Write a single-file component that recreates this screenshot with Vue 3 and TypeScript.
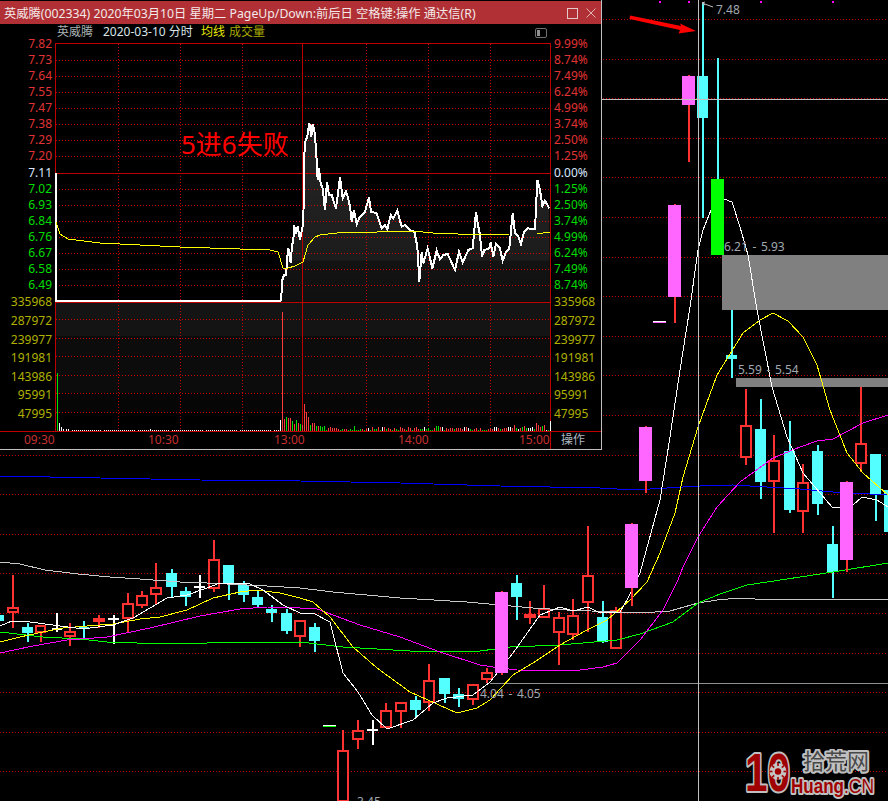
<script setup lang="ts">
type Kind = 'red' | 'solid' | 'cyan' | 'cross' | 'crossCyan' | 'limit' | 'green'
// kind, left, right, body top, body bottom, wick high, wick low
type Candle = [Kind, number, number, number, number, number, number]

const line = (pts: number[][]) => pts.map((p) => p.join(',')).join(' ')

const candles: Candle[] = [
  ['cyan', -4, 4, 615, 621, 615, 621],
  ['red', 7, 19, 607, 613, 575, 628],
  ['cyan', 22, 33, 627, 633, 623, 642],
  ['red', 35, 46, 625, 633, 625, 642],
  ['cross', 52, 62, 628, 630, 613, 632],
  ['red', 64, 76, 631, 637, 623, 646],
  ['crossCyan', 79, 89, 627, 629, 621, 638],
  ['solid', 93, 105, 618, 622, 615, 628],
  ['cross', 108, 119, 618, 620, 615, 644],
  ['red', 122, 134, 603, 619, 593, 632],
  ['red', 136, 148, 595, 606, 591, 608],
  ['red', 150, 162, 587, 595, 563, 604],
  ['cyan', 166, 177, 573, 587, 569, 598],
  ['cyan', 180, 191, 591, 597, 587, 606],
  ['cross', 194, 205, 586, 588, 575, 598],
  ['red', 208, 220, 559, 589, 540, 592],
  ['cyan', 223, 234, 565, 584, 565, 600],
  ['cyan', 238, 249, 585, 595, 581, 602],
  ['cyan', 252, 263, 597, 605, 591, 607],
  ['crossCyan', 266, 277, 609, 613, 605, 622],
  ['cyan', 281, 292, 613, 631, 609, 634],
  ['red', 294, 306, 620, 637, 620, 647],
  ['cyan', 309, 320, 627, 641, 623, 652],
  ['red', 337, 349, 750, 802, 730, 802],
  ['red', 352, 364, 730, 740, 720, 749],
  ['cross', 367, 378, 729, 731, 720, 745],
  ['red', 380, 392, 710, 728, 703, 728],
  ['red', 395, 407, 702, 712, 702, 728],
  ['cyan', 410, 421, 700, 710, 696, 717],
  ['red', 423, 435, 680, 703, 664, 711],
  ['cyan', 439, 450, 678, 694, 678, 703],
  ['cyan', 453, 464, 694, 699, 688, 707],
  ['red', 467, 479, 684, 700, 684, 705],
  ['red', 481, 493, 672, 680, 668, 683],
  ['cyan', 511, 522, 583, 597, 575, 620],
  ['solid', 524, 536, 614, 618, 601, 624],
  ['red', 538, 550, 608, 618, 585, 618],
  ['red', 553, 565, 617, 633, 612, 665],
  ['red', 567, 579, 615, 635, 599, 640],
  ['red', 582, 594, 575, 603, 526, 632],
  ['cyan', 597, 608, 617, 642, 601, 643],
  ['red', 610, 622, 610, 649, 607, 649],
  ['cyan', 697, 708, 76, 118, 2, 218],
  ['cyan', 726, 737, 355, 359, 310, 378],
  ['red', 740, 752, 425, 458, 389, 465],
  ['cyan', 755, 766, 429, 482, 399, 499],
  ['red', 768, 780, 460, 482, 435, 533],
  ['cyan', 784, 795, 451, 510, 421, 513],
  ['red', 797, 809, 482, 512, 464, 533],
  ['cyan', 812, 823, 451, 504, 445, 515],
  ['cyan', 827, 838, 544, 572, 526, 598],
  ['red', 855, 867, 443, 464, 387, 472],
  ['cyan', 870, 881, 454, 494, 454, 521],
  ['cyan', 884, 892, 490, 532, 490, 532],
]

// drawn over the moving averages
const topCandles: Candle[] = [
  ['limit', 495, 508, 592, 673, 591, 675],
  ['limit', 625, 638, 524, 588, 523, 606],
  ['limit', 639, 652, 427, 481, 426, 493],
  ['limit', 668, 681, 205, 297, 204, 323],
  ['limit', 682, 695, 76, 105, 75, 162],
  ['green', 711, 724, 179, 255, 58, 255],
  ['limit', 840, 853, 482, 560, 481, 572],
]

const wickColor = (k: Kind) => {
  if (k === 'cyan' || k === 'crossCyan' || k === 'green') return '#54ffff'
  if (k === 'cross') return '#ffffff'
  return '#ff3232'
}

const bodyColor = (k: Kind) => {
  if (k === 'limit') return '#ff66ff'
  if (k === 'green') return '#00ff00'
  if (k === 'solid') return '#ff3232'
  if (k === 'cross') return '#ffffff'
  return '#54ffff'
}

const gridY = Array.from({ length: 20 }, (_, i) => Math.round(19 + 39.6 * i) + 0.5)

const grayMa = line([[0,562],[20,564],[45,570],[78,574],[110,577],[140,579],[180,582],[207,583],[267,586],[300,588],[333,592],[400,598],[467,602],[533,608],[567,610],[640,613],[670,611],[698,603],[717,600],[740,598],[755,599],[888,599]])
const whiteMa = line([[0,626],[12,621],[30,622],[45,624],[68,627],[83,629],[113,625],[133,618],[150,608],[167,598],[187,595],[207,588],[220,583],[250,584],[263,590],[283,605],[300,613],[313,613],[330,622],[343,673],[358,692],[372,715],[387,729],[413,720],[433,703],[447,698],[473,695],[490,682],[513,653],[540,615],[560,607],[573,611],[588,607],[600,613],[620,612],[628,598],[640,573],[660,500],[670,437],[680,370],[690,307],[698,250],[703,230],[711,210],[724,199],[732,202],[740,227],[748,255],[757,310],[772,387],[787,437],[803,473],[832,507],[840,508],[853,505],[862,497],[877,500],[888,507]])
const yellowMa = line([[0,642],[20,637],[43,632],[63,628],[87,626],[113,624],[140,619],[160,617],[187,610],[213,598],[240,592],[257,590],[280,593],[300,598],[313,602],[330,617],[353,647],[377,668],[410,692],[457,713],[477,708],[490,700],[513,675],[533,663],[560,645],[587,630],[607,620],[630,600],[647,582],[660,553],[675,513],[683,477],[698,427],[717,375],[743,333],[760,320],[773,313],[788,321],[803,337],[817,365],[830,410],[847,453],[863,473],[888,495]])
const magentaMa = line([[0,653],[33,646],[67,640],[107,637],[150,628],[200,616],[240,609],[267,607],[300,608],[317,609],[360,625],[400,637],[440,652],[480,665],[500,668],[517,670],[573,671],[603,667],[617,663],[640,640],[663,610],[678,580],[683,567],[698,537],[717,507],[740,482],[773,458],[800,447],[817,441],[833,439],[863,423],[888,415]])
const greenMa = line([[0,632],[17,634],[43,637],[80,639],[107,642],[137,643],[207,643],[300,642],[343,647],[410,651],[480,651],[510,647],[560,645],[617,640],[640,634],[673,622],[698,603],[720,594],[747,585],[787,579],[833,572],[888,563]])
const blueMa = line([[0,476],[100,478],[200,480],[300,481],[400,483],[500,486],[600,488],[633,490],[667,488],[700,486],[733,485],[767,487],[800,489],[833,492],[888,495]])

// ---- intraday window ----
const priceLabels = [
  ['7.82', '9.99%', 44], ['7.73', '8.74%', 60], ['7.64', '7.49%', 76], ['7.55', '6.24%', 92],
  ['7.47', '4.99%', 108], ['7.38', '3.74%', 124], ['7.29', '2.50%', 140], ['7.20', '1.25%', 156],
  ['7.11', '0.00%', 173], ['7.02', '1.25%', 189], ['6.93', '2.50%', 205], ['6.84', '3.74%', 221],
  ['6.76', '4.99%', 237], ['6.67', '6.24%', 253], ['6.58', '7.49%', 269], ['6.49', '8.74%', 285],
] as [string, string, number][]

const priceColor = (i: number) => (i < 8 ? '#e03434' : i === 8 ? '#d8e8ff' : '#00dc00')

const volLabels = [
  ['335968', 302], ['287972', 321], ['239977', 340], ['191981', 358],
  ['143986', 377], ['95991', 395], ['47995', 414],
] as [string, number][]

const timeLabels = [
  ['09:30', 24], ['10:30', 148], ['13:00', 274], ['14:00', 398], ['15:00', 519],
] as [string, number][]

const priceGrid = [60, 76, 92, 108, 124, 140, 156, 189, 205, 221, 237, 253, 269, 285]
const volGrid = [319, 338, 356, 375, 393, 412]
const timeGrid = [118, 180, 242, 366, 428, 490]

// price curve, read off at 3x around (270,100)
const zoomed = [[33,603],[37,540],[42,525],[48,525],[52,470],[55,445],[62,490],[66,435],[70,425],[72,375],[78,400],[83,380],[90,420],[97,385],[100,360],[104,130],[112,110],[118,68],[124,110],[128,72],[133,90],[138,145],[143,240],[147,205],[152,250],[158,265],[165,330],[171,245],[177,285],[185,285],[198,325],[210,232],[218,295],[228,275],[233,290],[240,320],[245,365],[252,330],[260,372],[270,350],[285,335],[297,292],[303,335],[320,340],[335,385],[345,375],[352,388],[362,345],[370,355],[382,332],[395,380],[405,375],[420,390],[433,395],[442,440],[448,545],[455,455],[460,490],[473,445],[487,505],[500,452],[510,478],[520,465],[533,462],[555,510],[567,455],[578,488],[595,450],[608,445],[618,335],[624,375],[630,405],[636,470],[643,450],[658,445],[662,428],[670,470],[678,432],[690,445],[698,482],[708,455],[718,445],[728,340],[735,400],[745,410],[753,432],[762,395],[772,385],[795,388],[802,240],[810,270],[817,318],[825,302],[838,325]]
const curve = zoomed.map(([x, y]) => [270 + x / 3, 100 + y / 3])
const priceLine = line([[56, 173], [56, 300.5], [281, 300.5], ...curve])
const priceArea = line([[281, 302], ...curve, [550, 302]])

const avgLine = line([[56,222],[60,234],[68,239],[100,243],[180,247],[270,250],[278,252],[283,268],[288,268],[295,266],[303,262],[308,245],[315,237],[320,235],[337,233],[353,232],[377,232],[383,231],[413,231],[433,233],[458,234],[460,235],[510,234],[537,234],[550,232]])

interface Bar { x: number; h: number; c: string }
const RED = '#ff3c3c'
const GRN = '#00e000'
const WHT = '#ffffff'
const bars: Bar[] = [
  { x: 57, h: 58, c: GRN }, { x: 59, h: 8, c: WHT }, { x: 61, h: 4, c: WHT }, { x: 63, h: 2, c: WHT },
  { x: 66, h: 2, c: WHT }, { x: 68, h: 2, c: WHT },
]
for (let x = 72; x < 280; x += 2) {
  if (x % 34 !== 0) bars.push({ x, h: x === 150 ? 2 : 1, c: WHT })
}
bars.push({ x: 280, h: 11, c: WHT }, { x: 282, h: 119, c: RED })
const early: [string, number][] = [
  [RED, 12], [GRN, 14], [RED, 13], [RED, 13], [GRN, 10], [RED, 7], [GRN, 11], [RED, 8], [GRN, 7], [RED, 6],
  [RED, 27], [RED, 19], [RED, 14], [GRN, 6], [RED, 8], [RED, 8], [GRN, 5], [RED, 5], [GRN, 5], [GRN, 4], [GRN, 5],
]
early.forEach(([c, h], i) => bars.push({ x: 284 + i * 2, h, c }))
const tail: Record<number, [string, number]> = {
  512: [RED, 3], 514: [RED, 6], 516: [GRN, 3], 518: [WHT, 2], 520: [RED, 3], 522: [GRN, 4], 524: [RED, 5],
  526: [GRN, 3], 528: [WHT, 3], 530: [WHT, 3], 536: [RED, 8], 538: [RED, 6], 540: [RED, 4], 542: [GRN, 5],
  544: [RED, 6], 546: [WHT, 1], 428: [GRN, 3], 436: [GRN, 5], 438: [GRN, 5], 440: [RED, 4], 468: [WHT, 3],
  354: [GRN, 5], 368: [WHT, 3],
}
for (let x = 326; x < 549; x += 2) {
  const seed = Math.abs(Math.sin(x * 12.9898) * 43758.5453) % 1
  const fixed = tail[x]
  if (fixed) bars.push({ x, h: fixed[1], c: fixed[0] })
  else bars.push({ x, h: 1 + Math.floor(seed * 3.5), c: seed < 0.42 ? GRN : seed < 0.9 ? RED : WHT })
}
bars.push({ x: 550, h: 10, c: WHT })

// watermark gear spokes
const spokes = [0, 45, 90, 135, 180, 225, 270, 315]
</script>

<template>
  <div class="page">
    <!-- main k-line chart -->
    <svg class="kline" width="888" height="801" viewBox="0 0 888 801">
      <g shape-rendering="crispEdges">
        <line
          v-for="y in gridY"
          :key="y"
          x1="0"
          x2="888"
          :y1="y"
          :y2="y"
          stroke="#c80000"
          stroke-dasharray="1 2"
        />
        <rect x="722" y="255" width="166" height="55" fill="#808080" />
        <rect x="736" y="378" width="152" height="9" fill="#808080" />
        <line x1="490" x2="888" y1="683.5" y2="683.5" stroke="#909090" />

        <g v-for="c in candles" :key="c[1]">
          <rect :x="(c[1] + c[2]) / 2 - 1" :y="c[5]" width="2" :height="c[6] - c[5]" :fill="wickColor(c[0])" />
          <rect
            v-if="c[0] === 'red'"
            :x="c[1] + 1"
            :y="c[3] + 1"
            :width="c[2] - c[1] - 2"
            :height="c[4] - c[3] - 2"
            fill="#000"
            stroke="#ff3232"
            stroke-width="2"
          />
          <rect v-else :x="c[1]" :y="c[3]" :width="c[2] - c[1]" :height="c[4] - c[3]" :fill="bodyColor(c[0])" />
        </g>

        <g fill="none" stroke-width="1">
          <polyline :points="blueMa" stroke="#0000ff" />
          <polyline :points="grayMa" stroke="#c8c8c8" />
          <polyline :points="greenMa" stroke="#00ff00" />
          <polyline :points="magentaMa" stroke="#ff00ff" />
          <polyline :points="yellowMa" stroke="#ffff00" />
          <polyline :points="whiteMa" stroke="#ffffff" />
        </g>

        <g v-for="c in topCandles" :key="c[1]">
          <rect :x="(c[1] + c[2]) / 2 - 1" :y="c[5]" width="2" :height="c[6] - c[5]" :fill="wickColor(c[0])" />
          <rect :x="c[1]" :y="c[3]" :width="c[2] - c[1]" :height="c[4] - c[3]" :fill="bodyColor(c[0])" />
        </g>

        <rect x="323" y="725" width="13" height="1" fill="#ffffff" />
        <rect x="323" y="726" width="13" height="1" fill="#00ff00" />
        <rect x="653" y="321" width="13" height="1" fill="#ffffff" />
        <rect x="653" y="322" width="13" height="1" fill="#ff66ff" />

        <line x1="698.5" x2="698.5" y1="0" y2="801" stroke="#c0c0c0" />
        <line x1="602" x2="888" y1="99.5" y2="99.5" stroke="#c0c0c0" />

        <rect v-for="x in [659, 688, 760, 832]" :key="x" :x="x" y="1" width="2" height="2" fill="#ff00ff" />
      </g>

      <polyline points="702,3 713,7" stroke="#c0c0c0" fill="none" />
      <polyline points="705,2 702,3 705,5" stroke="#c0c0c0" fill="none" />

      <g class="note">
        <text x="716" y="14">7.48</text>
        <text x="724" y="251">6.21 - 5.93</text>
        <text x="738" y="374">5.59 - 5.54</text>
        <text x="480" y="698">4.04 - 4.05</text>
        <text x="357" y="806">3.45</text>
      </g>

      <!-- red arrow -->
      <polygon points="630,15.5 681,26 680,23.5 696,31 678.5,33.5 680,30 629.5,19" fill="#ff0000" />
    </svg>

    <!-- floating intraday window -->
    <section class="win">
      <header class="win-title">
        <span class="win-caption">英威腾(002334) 2020年03月10日 星期二 PageUp/Down:前后日 空格键:操作 通达信(R)</span>
        <span class="win-btns">
          <svg width="12" height="12" viewBox="0 0 12 12">
            <rect x="1" y="1" width="10" height="10" fill="none" stroke="#e4c8c8" shape-rendering="crispEdges" />
          </svg>
          <svg width="12" height="12" viewBox="0 0 12 12">
            <path d="M1.5 1.5 L10.5 10.5 M10.5 1.5 L1.5 10.5" fill="none" stroke="#dfb4b4" />
          </svg>
        </span>
      </header>
      <svg class="win-chart" width="601" height="425" viewBox="0 24 601 425">
        <defs>
          <linearGradient id="areaFill" gradientUnits="userSpaceOnUse" x1="0" x2="0" y1="120" y2="302">
            <stop offset="0" stop-color="#262626" />
            <stop offset="0.77" stop-color="#1c1c1c" />
            <stop offset="0.775" stop-color="#131313" />
            <stop offset="1" stop-color="#101010" />
          </linearGradient>
        </defs>

        <g shape-rendering="crispEdges">
          <rect x="56" y="303" width="494" height="33" fill="#141414" />
          <rect x="56" y="336" width="494" height="57" fill="#0c0c0c" />
          <rect x="56" y="393" width="494" height="20" fill="#060606" />
        </g>
        <polygon :points="priceArea" fill="url(#areaFill)" />

        <g shape-rendering="crispEdges" stroke="#d00000" stroke-dasharray="1 2">
          <line v-for="y in priceGrid" :key="y" x1="56" x2="550" :y1="y + 0.5" :y2="y + 0.5" />
          <line v-for="y in volGrid" :key="y" x1="56" x2="550" :y1="y + 0.5" :y2="y + 0.5" />
          <line v-for="x in timeGrid" :key="x" :x1="x + 0.5" :x2="x + 0.5" y1="44" y2="431" />
        </g>

        <g shape-rendering="crispEdges" stroke="#c00000">
          <line x1="55.5" x2="55.5" y1="43" y2="431" />
          <line x1="550.5" x2="550.5" y1="43" y2="449" />
          <line x1="302.5" x2="302.5" y1="43" y2="431" />
          <line x1="55" x2="550" y1="43.5" y2="43.5" />
          <line x1="55" x2="550" y1="173.5" y2="173.5" />
          <line x1="55" x2="550" y1="302.5" y2="302.5" />
          <line x1="0" x2="601" y1="431.5" y2="431.5" />
        </g>

        <polyline :points="priceLine" fill="none" stroke="#ffffff" stroke-width="2" shape-rendering="crispEdges" />
        <polyline :points="avgLine" fill="none" stroke="#ffff00" stroke-width="1" shape-rendering="crispEdges" />

        <g shape-rendering="crispEdges">
          <rect v-for="b in bars" :key="b.x" :x="b.x" :y="431 - b.h" width="1" :height="b.h" :fill="b.c" />
        </g>

        <g class="axis">
          <template v-for="(p, i) in priceLabels" :key="p[2]">
            <text x="52" :y="p[2] + 3.5" text-anchor="end" :fill="priceColor(i)">{{ p[0] }}</text>
            <text x="554" :y="p[2] + 3.5" :fill="priceColor(i)">{{ p[1] }}</text>
          </template>
          <template v-for="v in volLabels" :key="v[0]">
            <text x="52" :y="v[1] + 3.5" text-anchor="end" fill="#b0b000">{{ v[0] }}</text>
            <text x="554" :y="v[1] + 3.5" fill="#b0b000">{{ v[0] }}</text>
          </template>
          <text v-for="t in timeLabels" :key="t[0]" :x="t[1]" y="444" fill="#c83030">{{ t[0] }}</text>
          <text x="561" y="444" fill="#b0b8c0">操作</text>
          <text x="57" y="36" fill="#a8b0b0">英威腾</text>
          <text x="103" y="36" fill="#d8e4e8">2020-03-10 分时</text>
          <text x="201" y="36" fill="#e8e800">均线</text>
          <text x="229" y="36" fill="#a8a800">成交量</text>
        </g>

        <text class="headline" x="181" y="154">5进6失败</text>

        <!-- legend toggle -->
        <rect x="535.5" y="28.5" width="11" height="9" rx="1.5" fill="none" stroke="#707070" />
        <rect x="537" y="30" width="3" height="6" fill="#909090" />
      </svg>
    </section>

    <!-- watermark -->
    <svg class="mark" width="143" height="52" viewBox="0 0 143 52">
      <g class="mark-halo">
        <text class="mark-ten" x="0" y="42" textLength="45" lengthAdjust="spacingAndGlyphs">10</text>
        <text class="mark-cn" x="58" y="20">拾荒网</text>
        <text class="mark-en" x="46" y="44" textLength="53" lengthAdjust="spacingAndGlyphs">Huang</text>
        <text class="mark-dot" x="99" y="44" textLength="30" lengthAdjust="spacingAndGlyphs">.CN</text>
      </g>
      <!-- gear inside the zero -->
      <circle cx="33" cy="22.5" r="8.5" fill="#c4c4c4" />
      <g fill="#a00000">
        <rect
          v-for="a in spokes"
          :key="a"
          x="32.2"
          y="14"
          width="1.6"
          height="3"
          :transform="`rotate(${a} 33 22.5)`"
        />
        <circle cx="33" cy="22.5" r="3.2" />
      </g>
    </svg>
  </div>
</template>

<style scoped>
.page {
  position: relative;
  width: 888px;
  height: 801px;
  background: #000;
  overflow: hidden;
  font-family: 'Noto Sans', 'Noto Sans CJK SC', sans-serif;
}

.kline {
  display: block;
}

.note text {
  fill: #a0a8b0;
  font-size: 12px;
  word-spacing: 1.5px;
}

.win {
  position: absolute;
  top: 0;
  left: 0;
  width: 601px;
  height: 449px;
  display: flex;
  flex-direction: column;
  background: #000;
  border-right: 1px solid #c0c0c0;
  border-bottom: 1px solid #c0c0c0;
}

.win-title {
  display: flex;
  align-items: center;
  justify-content: space-between;
  height: 23px;
  margin-top: 1px;
  padding: 0 4px;
  background: #b03035;
  color: #f4e8e8;
  font-size: 12.27px;
  white-space: nowrap;
}

.win-btns {
  display: flex;
  gap: 7px;
}

.win-btns svg {
  display: block;
}

.win-chart {
  display: block;
}

.axis text {
  font-size: 12px;
}

.headline {
  fill: #ff0000;
  font-size: 26px;
}

.mark {
  position: absolute;
  left: 745px;
  top: 749px;
}

.mark-halo text {
  paint-order: stroke;
  stroke: #c0c0c0;
  stroke-width: 4px;
  stroke-linejoin: round;
}

.mark-ten {
  fill: #a00000;
  font-size: 54px;
  font-weight: 700;
  font-family: 'Liberation Sans', sans-serif;
}

.mark-cn {
  fill: #484848;
  font-size: 22px;
}

.mark-en {
  fill: #a00000;
  font-size: 21px;
  font-weight: 700;
  font-family: 'Liberation Sans', sans-serif;
}

.mark-dot {
  fill: #a00000;
  font-size: 21px;
  font-family: 'Liberation Sans', sans-serif;
}
</style>

<style>
html,
body {
  margin: 0;
  background: #000;
}
</style>
